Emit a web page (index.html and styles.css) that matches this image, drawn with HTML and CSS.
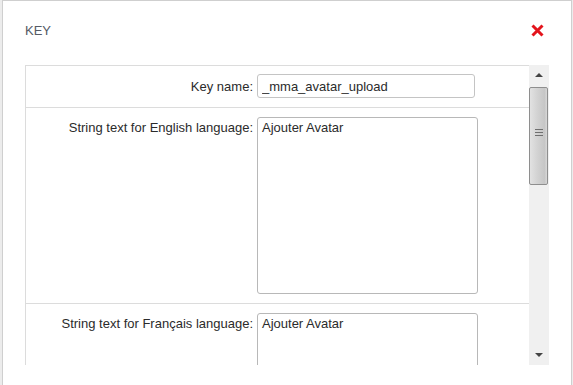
FILE: index.html
```html
<!DOCTYPE html>
<html lang="en">
<head>
    <meta charset="UTF-8">
    <title>Key</title>
    <link rel="stylesheet" href="styles.css">
</head>
<body>
    <div class="dialog">
        <div class="dialog-header">
            <span class="dialog-title">KEY</span>
            <a class="close-btn" href="#" title="Close">
                <svg width="13" height="13" viewBox="0 0 13 13">
                    <path d="M1.5 1.5 L11.5 11.5 M11.5 1.5 L1.5 11.5" stroke="#e3141c" stroke-width="3" fill="none"/>
                </svg>
            </a>
        </div>

        <div class="panel">
            <div class="panel-body">
                <div class="row row-key">
                    <label class="row-label" for="keyName">Key name:</label>
                    <input type="text" id="keyName" class="field-input" value="_mma_avatar_upload">
                </div>
                <div class="row">
                    <label class="row-label row-label-top" for="textEn">String text for English language:</label>
                    <textarea id="textEn" class="field-text">Ajouter Avatar</textarea>
                </div>
                <div class="row">
                    <label class="row-label row-label-top" for="textFr">String text for Français language:</label>
                    <textarea id="textFr" class="field-text">Ajouter Avatar</textarea>
                </div>
            </div>
            <div class="scrollbar">
                <div class="scroll-btn"><span class="arrow-up"></span></div>
                <div class="scroll-thumb">
                    <span class="grip"></span>
                </div>
                <div class="scroll-track"></div>
                <div class="scroll-btn"><span class="arrow-down"></span></div>
            </div>
        </div>
    </div>
</body>
</html>
```

FILE: styles.css
```css
body {
    margin: 0;
    background: #ececec;
    font-family: "Liberation Sans", Arial, sans-serif;
    font-size: 13px;
    color: #2b2b2b;
    overflow: hidden;
}

.dialog {
    margin-left: 2px;
    width: 570px;
    height: 385px;
    box-sizing: border-box;
    background: #fff;
    border: 1px solid #cfcfcf;
    border-bottom: none;
    padding: 22px 22px 0 22px;
}

.dialog-header {
    display: flex;
    justify-content: space-between;
    align-items: center;
    height: 15px;
    line-height: 15px;
}

.dialog-title {
    color: #555b66;
    font-size: 13px;
}

.close-btn {
    display: flex;
    margin-right: 5px;
}

.panel {
    display: flex;
    height: 300px;
    margin-top: 27px;
}

.panel-body {
    flex: 1;
    border-top: 1px solid #dcdcdc;
    border-left: 1px solid #dcdcdc;
    overflow: hidden;
}

.row {
    display: flex;
    align-items: flex-start;
    padding: 9px 0;
    border-bottom: 1px solid #dcdcdc;
}

.row-key {
    align-items: center;
    padding: 8px 0 9px;
}

.row-label {
    width: 227px;
    flex-shrink: 0;
    text-align: right;
    line-height: 15px;
}

.row-label-top {
    padding-top: 3px;
}

.field-input,
.field-text {
    margin-left: 4px;
    box-sizing: border-box;
    border: 1px solid #c4c4c4;
    border-radius: 3px;
    font-family: "Liberation Sans", Arial, sans-serif;
    font-size: 13px;
    color: #2b2b2b;
    background: #fff;
    outline: none;
}

.field-input {
    width: 218px;
    height: 24px;
    padding: 0 4px;
}

.field-text {
    width: 221px;
    height: 177px;
    padding: 2px 4px;
    line-height: 15px;
    resize: none;
    overflow: hidden;
    border-color: #b8b8b8;
}

/* fake scrollbar */
.scrollbar {
    width: 20px;
    display: flex;
    flex-direction: column;
    background: #f0f0f0;
}

.scroll-btn {
    height: 20px;
    display: flex;
    align-items: center;
    justify-content: center;
}

.arrow-up,
.arrow-down {
    width: 0;
    height: 0;
    border-left: 4px solid transparent;
    border-right: 4px solid transparent;
}

.arrow-up {
    border-bottom: 4px solid #444;
}

.arrow-down {
    border-top: 4px solid #444;
}

.scroll-thumb {
    height: 98px;
    margin: 2px 1px 0 0;
    box-sizing: border-box;
    border: 1px solid #8e8e8e;
    border-radius: 2px;
    background: linear-gradient(to right, #e2e2e2, #d2d2d2 45%, #c6c6c6 85%, #d8d8d8);
    display: flex;
    align-items: center;
    justify-content: center;
}

.grip {
    width: 8px;
    height: 7px;
    margin-top: -8px;
    border-top: 1px solid #6f6f6f;
    border-bottom: 1px solid #6f6f6f;
    background: linear-gradient(#6f6f6f, #6f6f6f) center / 100% 1px no-repeat;
    box-sizing: border-box;
}

.scroll-track {
    flex: 1;
}
```
